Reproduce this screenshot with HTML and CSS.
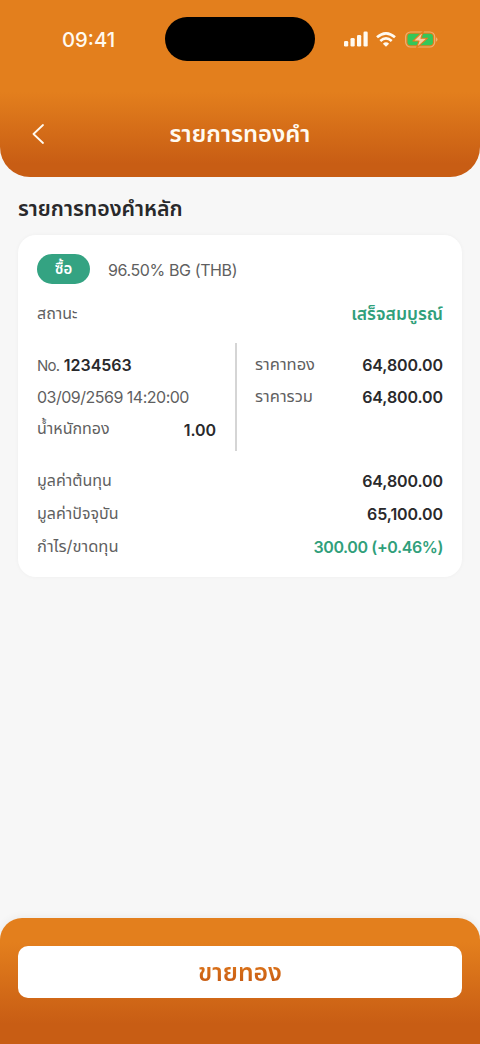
FILE: index.html
```html
<!DOCTYPE html>
<html lang="th">
<head>
<meta charset="utf-8">
<meta name="viewport" content="width=device-width, initial-scale=1">
<title>รายการทองคำ</title>
<link rel="stylesheet" href="styles.css">
</head>
<body>
<div class="screen">
  <header class="header">
    <div class="status">
      <span class="time">09:41</span>
      <span class="island"></span>
      <span class="icons">
        <svg width="24" height="16" viewBox="0 0 24 16" fill="#fffaf0"><rect x="0" y="10" width="4.200" height="5.500" rx="1.3"/><rect x="6.500" y="7" width="4.200" height="8.500" rx="1.3"/><rect x="13" y="4" width="4.200" height="11.500" rx="1.3"/><rect x="19.500" y="0.500" width="4.200" height="15" rx="1.3"/></svg>
        <svg width="20" height="15" viewBox="0 0 20 15" fill="none" stroke="#fffaf0" stroke-width="2.7"><path d="M1 5.300Q10-2.500 19 5.300"/><path d="M4.300 8.900Q10 4 15.700 8.900"/><path d="M6.900 11.700Q10 9 13.100 11.700L10 14.800Z" fill="#fffaf0" stroke="none"/></svg>
        <svg class="battery" width="34" height="17" viewBox="0 0 34 17"><rect x=".7" y="1" width="29" height="15" rx="4.800" fill="none" stroke="#efb272" stroke-width="1.2"/><rect x="2.500" y="2.800" width="25.400" height="11.400" rx="3" fill="#34c759"/><path d="M31 6.200v4.600q1.500-.7 1.500-2.300t-1.500-2.300" fill="#efb272"/><path d="M18.500 0L8 10H14L11.500 17L22.500 7.200H16Z" fill="#f6cfa3" stroke="#e37e1d" stroke-width="1.100" stroke-linejoin="round"/></svg>
      </span>
    </div>
    <div class="nav">
      <svg class="back" width="12" height="20" viewBox="0 0 12 20" fill="none" stroke="#fffaf0" stroke-width="1.8" stroke-linecap="round" stroke-linejoin="round"><path d="M11 1L1.500 10L11 19"/></svg>
      <h1 class="title">รายการทองคำ</h1>
    </div>
  </header>
  <main class="content">
    <h2 class="heading">รายการทองคำหลัก</h2>
    <section class="card">
      <div class="product"><span class="badge">ซื้อ</span><span class="tight">96.50% BG (THB)</span></div>
      <div class="row status-row"><span>สถานะ</span><b class="green done">เสร็จสมบูรณ์</b></div>
      <div class="split">
        <div class="left">
          <div class="row"><span><span class="number-label">No.</span> <b class="number">1234563</b></span></div>
          <div class="row"><span class="date">03/09/2569 14:20:00</span></div>
          <div class="row"><span>น้ำหนักทอง</span><b class="weight">1.00</b></div>
        </div>
        <div class="right">
          <div class="row"><span class="price">ราคาทอง</span><b>64,800.00</b></div>
          <div class="row"><span class="price">ราคารวม</span><b>64,800.00</b></div>
        </div>
      </div>
      <div class="totals">
        <div class="row"><span>มูลค่าต้นทุน</span><b>64,800.00</b></div>
        <div class="row"><span>มูลค่าปัจจุบัน</span><b>65,100.00</b></div>
        <div class="row"><span class="profit">กำไร/ขาดทุน</span><b class="green gain">300.00 (+0.46%)</b></div>
      </div>
    </section>
  </main>
  <footer class="footer"><button class="sell"><span class="sell-label">ขายทอง</span></button></footer>
</div>
</body>
</html>
```
FILE: styles.css
```css
* { box-sizing: border-box; }
body { margin: 0; font-family: Inter, "Noto Sans Thai", "Noto Sans", sans-serif; color: #5f5f61; font-size: 16px; }
.screen { width: 480px; height: 1044px; display: flex; flex-direction: column; background: #f7f7f7; overflow: hidden; }
.header { height: 177px; border-radius: 0 0 30px 30px; background: linear-gradient(#e37f1d 92px, #c85d14 164px); color: #fffaf0; flex: none; }
.status { height: 78px; display: grid; grid-template-columns: 165px 150px 1fr; align-items: center; }
.time { text-align: center; padding: 0 0 0 12px; font-size: 20.300px; font-weight: 550; }
.island { height: 44px; border-radius: 22px; background: #000; }
.icons { display: flex; align-items: center; gap: 8px; padding-left: 29px; }
.battery { margin-left: 1px; }
.nav { height: 112px; display: grid; grid-template-columns: 48px 1fr 48px; align-items: center; }
.back { margin-left: 32px; }
.title { margin: 0; padding-top: 2px; text-align: center; font-size: 23.8px; font-weight: 600; }
.content { flex: 1; padding: 15px 18px; }
.heading { margin: 0; height: 43px; line-height: 33px; font-size: 21.3px; font-weight: 600; color: #29292b; }
.card { height: 342px; background: #fff; border-radius: 18px; padding: 19px 19px 0; box-shadow: 0 0 4px #0000000a; }
.product { display: flex; gap: 18px; height: 30px; align-items: center; }
.tight { letter-spacing: -.39px; padding-top: 2px; }
.badge { width: 53px; height: 30px; border-radius: 15px; background: #34a382; color: #fff; font-size: 15px; font-weight: 600; display: grid; place-items: center; }
.row { display: flex; justify-content: space-between; align-items: center; height: 32px; white-space: nowrap; }
b { color: #29292b; font-weight: 600; letter-spacing: -.1px; }
.green { color: #309f7b; }
.done { font-size: 17.500px; letter-spacing: 0; }
.number-label { font-size: 15px; letter-spacing: -.8px; }
.number { letter-spacing: 0; }
.date { letter-spacing: -.5px; }
.weight { padding-top: 2px; }
.price { font-size: 16.500px; padding-bottom: 1px; }
.profit { font-size: 16.500px; }
.gain { letter-spacing: -.4px; }
.status-row { margin-top: 14px; }
.split { margin-top: 13px; height: 108px; display: grid; grid-template-columns: 200px 1fr; }
.left { border-right: 2px solid #d5d5d5; padding: 6px 19px 0 0; }
.right { padding: 6px 0 0 18px; }
.totals { margin-top: 13px; }
.totals .row { height: 33px; }
.footer { height: 126px; border-radius: 22px 22px 0 0; padding: 28px 18px; background: linear-gradient(#e37f1d 24px, #c85d14 106px); box-shadow: 0 0 10px #0001; }
.sell { width: 100%; height: 52px; border: 0; border-radius: 10px; background: #fff; padding: 3px 0 0; font: 600 24.800px Inter, "Noto Sans Thai", "Noto Sans", sans-serif; }
.sell-label { color: transparent; background: linear-gradient(#dc741a 25%, #c85d14 80%); background-clip: text; -webkit-background-clip: text; }
```
